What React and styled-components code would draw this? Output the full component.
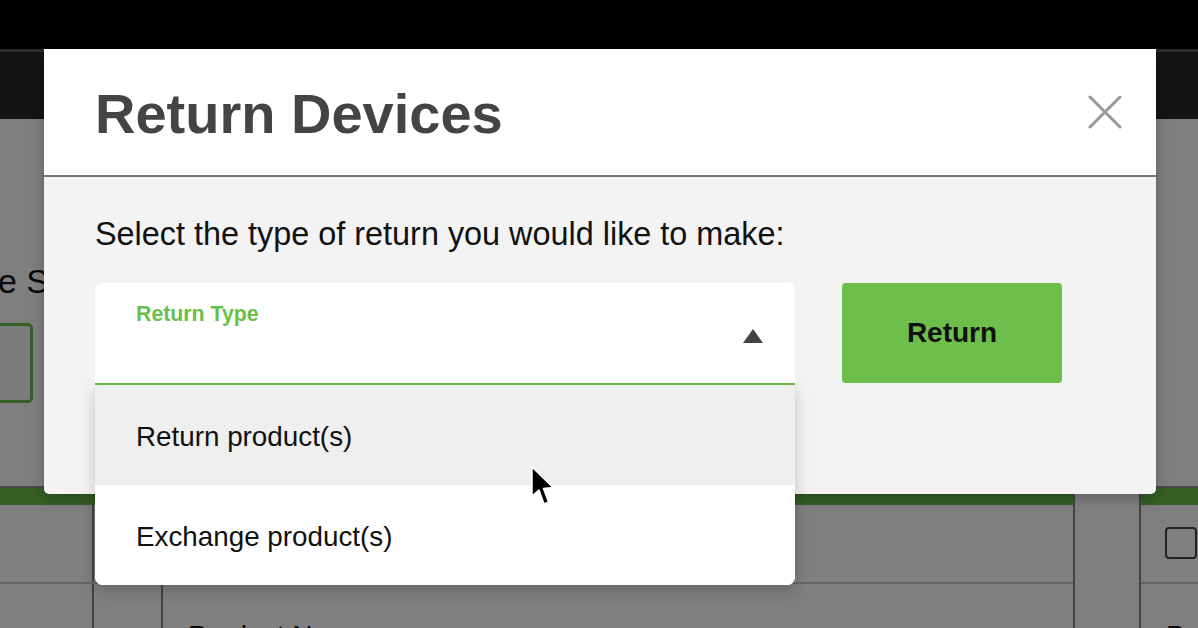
import React from 'react'
import styled, { createGlobalStyle } from 'styled-components'

const GlobalStyle = createGlobalStyle`
  html, body {
    margin: 0;
    padding: 0;
    overflow: hidden;
  }
  body {
    font-family: 'Liberation Sans', Arial, Helvetica, sans-serif;
  }
  * {
    box-sizing: border-box;
  }
`

const brandGreen = '#6dbe4b'

// ---- page behind the modal ----

const Screen = styled.div`
  position: relative;
  width: 1198px;
  height: 628px;
  overflow: hidden;
  background: #fff;
`

const TopBar = styled.div`
  height: 49px;
  background: #000;
`

const NavBar = styled.div`
  height: 70px;
  background: #282828;
  border-top: 3px solid #565656;
`

const Content = styled.div`
  margin-left: -87px;
  width: 1600px;
`

const PageTitle = styled.h2`
  margin: 142px 0 0;
  font-size: 34px;
  font-weight: 400;
  line-height: 1.2;
  color: #111;
`

const SearchBox = styled.div`
  margin-top: 21px;
  width: 120px;
  height: 80px;
  border: 3px solid ${brandGreen};
  border-radius: 5px;
  background: #f6fbf4;
`

const Tables = styled.div`
  display: flex;
  gap: 64px;
  margin-top: 83px;
`

const Panel = styled.div`
  flex-shrink: 0;
  width: ${p => p.$width}px;
  border-top: 2px solid #949494;
  border-left: 2px solid #888;
  border-right: 2px solid #888;
`

const PanelHead = styled.div`
  height: 17px;
  background: ${brandGreen};
`

const Row = styled.div`
  display: grid;
  grid-template-columns: ${p => p.$cols};
  height: 79px;
  border-bottom: 2px solid #ccc;
`

const Cell = styled.div`
  display: flex;
  align-items: ${p => (p.$top ? 'flex-start' : 'center')};
  padding: ${p => (p.$top ? '36px 0 0 25px' : '0 0 0 24px')};
  font-size: 28px;
  color: #111;
  border-right: ${p => (p.$last ? 'none' : '2px solid #888')};
`

const Checkbox = styled.span`
  width: 32px;
  height: 32px;
  border: 2px solid #444;
  border-radius: 4px;
  background: #fff;
`

// ---- modal ----

const Overlay = styled.div`
  position: absolute;
  inset: 0;
  background: rgba(0, 0, 0, 0.5);
  padding: 49px 0 0 44px;
`

const Modal = styled.div`
  width: 1112px;
  background: #f3f3f3;
  border-radius: 0 0 5px 5px;
  box-shadow: 0 4px 14px rgba(0, 0, 0, 0.25);
`

const ModalHeader = styled.div`
  height: 128px;
  display: flex;
  align-items: center;
  justify-content: space-between;
  padding: 0 34px 0 51px;
  background: #fff;
  border-bottom: 2px solid #777;
`

const ModalTitle = styled.h1`
  margin: 3px 0 0;
  font-size: 56px;
  font-weight: 700;
  line-height: 1;
  color: #444;
`

const CloseButton = styled.button`
  display: flex;
  padding: 0;
  border: none;
  background: none;
  cursor: pointer;
`

const ModalBody = styled.div`
  height: 317px;
  padding: 38px 0 0 51px;
`

const Prompt = styled.p`
  margin: 0;
  font-size: 32.4px;
  line-height: 38px;
  color: #111;
`

const FormRow = styled.div`
  display: flex;
  align-items: flex-start;
  gap: 47px;
  margin-top: 30px;
`

const SelectField = styled.div`
  position: relative;
  display: flex;
  width: 700px;
  height: 102px;
  padding: 19px 32px 0 41px;
  background: #fff;
  border-radius: 6px 6px 0 0;
  border-bottom: 2px solid ${brandGreen};
`

const FieldLabel = styled.span`
  flex: 1;
  font-size: 21.3px;
  font-weight: 700;
  line-height: 1.2;
  color: #6abf4b;
`

const Caret = styled.svg`
  margin-top: 27px;
`

const Menu = styled.ul`
  position: absolute;
  top: calc(100% + 2px);
  left: 0;
  width: 700px;
  margin: 0;
  padding: 0;
  list-style: none;
  background: #fff;
  border-radius: 0 0 8px 8px;
  box-shadow: 0 6px 16px rgba(0, 0, 0, 0.2);
  overflow: hidden;
`

const MenuItem = styled.li`
  display: flex;
  align-items: center;
  height: 100px;
  padding: 4px 0 0 41px;
  font-size: 27.8px;
  color: #111;
  background: ${p => (p.$hover ? '#efefef' : '#fff')};
`

const ReturnButton = styled.button`
  width: 220px;
  height: 100px;
  border: none;
  border-radius: 4px;
  background: ${brandGreen};
  font-family: inherit;
  font-size: 28px;
  font-weight: 700;
  color: #111;
  cursor: pointer;
`

const Pointer = styled.svg`
  position: absolute;
  left: 531px;
  top: 466px;
`

const options = ['Return product(s)', 'Exchange product(s)']

export default function App() {
  return (
    <Screen>
      <GlobalStyle />
      <TopBar />
      <NavBar />
      <Content>
        <PageTitle>Device Search</PageTitle>
        <SearchBox />
        <Tables>
          <Panel $width={1162}>
            <PanelHead />
            <Row $cols="179px 1fr">
              <Cell />
              <Cell $last />
            </Row>
            <Row $cols="179px 69px 1fr">
              <Cell />
              <Cell />
              <Cell $top $last>Product Name</Cell>
            </Row>
          </Panel>
          <Panel $width={300}>
            <PanelHead />
            <Row $cols="1fr">
              <Cell $last>
                <Checkbox />
              </Cell>
            </Row>
            <Row $cols="1fr">
              <Cell $top $last>Product Name</Cell>
            </Row>
          </Panel>
        </Tables>
      </Content>

      <Overlay>
        <Modal>
          <ModalHeader>
            <ModalTitle>Return Devices</ModalTitle>
            <CloseButton aria-label="Close">
              <svg width="34" height="34" viewBox="0 0 34 34">
                <path d="M2 2 L32 32 M32 2 L2 32" stroke="#999" strokeWidth="3" strokeLinecap="round" />
              </svg>
            </CloseButton>
          </ModalHeader>
          <ModalBody>
            <Prompt>Select the type of return you would like to make:</Prompt>
            <FormRow>
              <SelectField>
                <FieldLabel>Return Type</FieldLabel>
                <Caret width="20" height="14" viewBox="0 0 20 14">
                  <polygon points="10,0 20,14 0,14" fill="#444" />
                </Caret>
                <Menu>
                  {options.map((o, i) => (
                    <MenuItem key={o} $hover={i === 0}>{o}</MenuItem>
                  ))}
                </Menu>
              </SelectField>
              <ReturnButton>Return</ReturnButton>
            </FormRow>
          </ModalBody>
        </Modal>
      </Overlay>

      <Pointer width="26" height="42" viewBox="-1 -1 26 42">
        <path d="M0 0 L0 29 L7 23 L12 37 L16.5 35 L11.5 21.5 L21 20.5 Z" fill="#000" stroke="#fff" strokeWidth="1.5" strokeLinejoin="round" />
      </Pointer>
    </Screen>
  )
}
